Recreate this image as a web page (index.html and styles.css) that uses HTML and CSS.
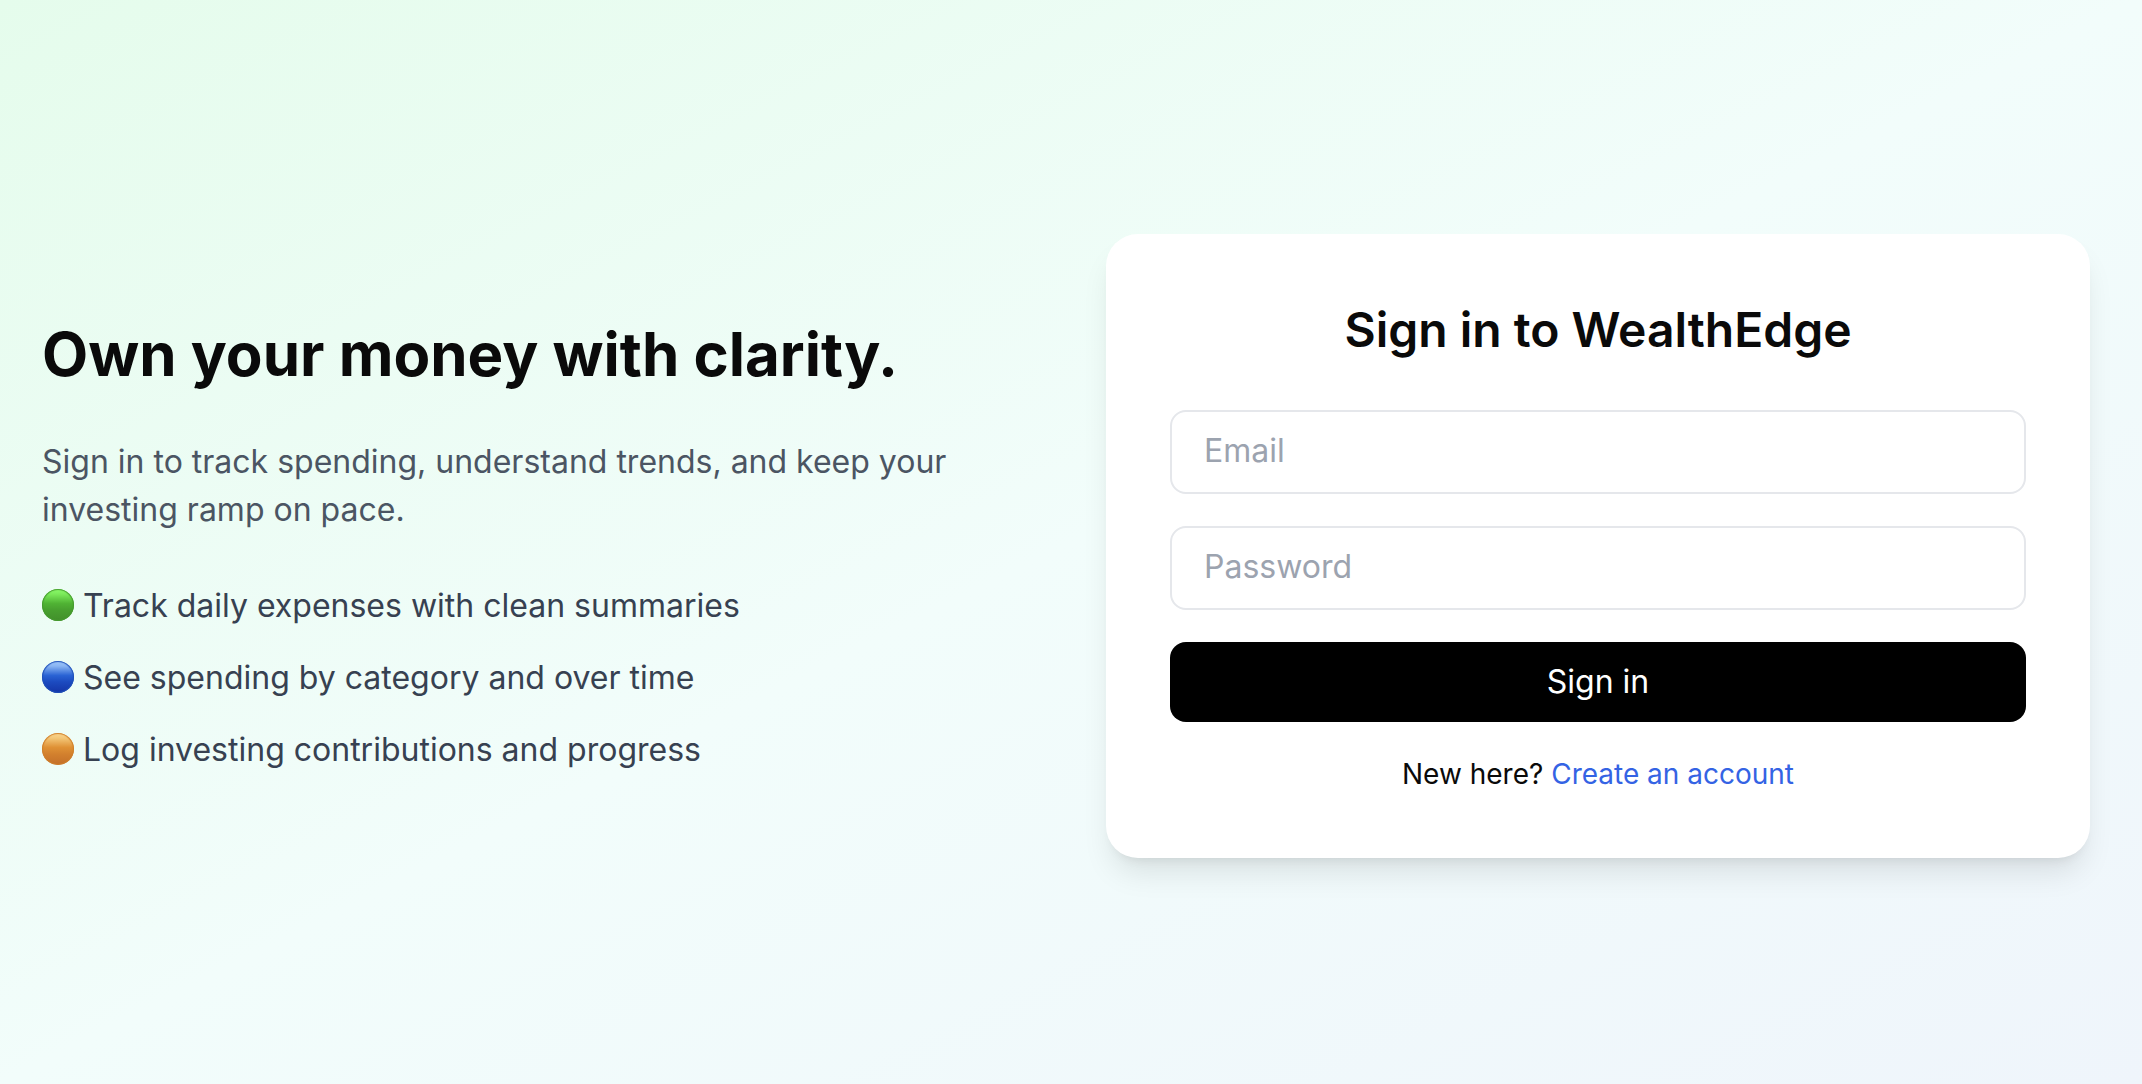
FILE: index.html
```html
<!DOCTYPE html>
<html lang="en">
<head>
  <meta charset="utf-8">
  <meta name="viewport" content="width=device-width, initial-scale=1">
  <title>Sign in to WealthEdge</title>
  <link rel="stylesheet" href="styles.css">
</head>
<body>
  <main class="page">
    <section class="intro">
      <h1 class="intro-title">Own your money with clarity.</h1>
      <p class="intro-text">Sign in to track spending, understand trends, and keep your investing ramp on pace.</p>
      <ul class="features">
        <li><span class="dot dot-green"></span> Track daily expenses with clean summaries</li>
        <li><span class="dot dot-blue"></span> See spending by category and over time</li>
        <li><span class="dot dot-orange"></span> Log investing contributions and progress</li>
      </ul>
    </section>
    <section class="card">
      <h2 class="card-title">Sign in to WealthEdge</h2>
      <form class="form">
        <input class="field" type="email" placeholder="Email" aria-label="Email">
        <input class="field" type="password" placeholder="Password" aria-label="Password">
        <button class="submit" type="submit">Sign in</button>
      </form>
      <p class="signup">New here? <a class="link" href="#">Create an account</a></p>
    </section>
  </main>
</body>
</html>
```
FILE: styles.css
```css
*,
*::before,
*::after {
  box-sizing: border-box;
  margin: 0;
  padding: 0;
}

body {
  font-family: Inter, "Liberation Sans", sans-serif;
  font-size: 32px;
  line-height: 48px;
  color: #0a0a0a;
}

.page {
  min-height: 100vh;
  padding: 8px 52px 0 42px;
  display: grid;
  grid-template-columns: 1fr 1fr;
  gap: 80px;
  align-items: center;
  background: linear-gradient(to bottom right, #e5fcec, #f2fdfb 50%, #eff5fb);
}

.intro {
  display: flex;
  flex-direction: column;
  gap: 48px;
}

.intro-title {
  font-size: 60px;
  line-height: 72px;
  font-weight: 700;
}

.intro-text {
  color: #4b5563;
}

.features {
  display: flex;
  flex-direction: column;
  gap: 24px;
  list-style: none;
  color: #374151;
}

.dot {
  display: inline-block;
  width: 32px;
  height: 32px;
  border-radius: 50%;
  vertical-align: -4px;
}

.dot-green {
  background: linear-gradient(#8dfb6b, #7bea5a 16%, #50b334 45%, #48a02f 65%, #428f2b);
  box-shadow: inset 0 0 1px 1px #459a2e;
}

.dot-blue {
  background: linear-gradient(#a0c8fa, #8ab5f3 16%, #2a63d4 45%, #1c4bc0 65%, #1434a6);
  box-shadow: inset 0 0 1px 1px #1f50b8;
}

.dot-orange {
  background: linear-gradient(#fbd793, #f3c677 16%, #df9135 45%, #d3812e 65%, #c36f29);
  box-shadow: inset 0 0 1px 1px #cf7f2b;
}

.card {
  padding: 64px;
  border-radius: 32px;
  background: #fff;
  box-shadow: 0 20px 30px -6px rgb(0 0 0 / 10%), 0 8px 12px -8px rgb(0 0 0 / 10%);
  text-align: center;
}

.card-title {
  margin-bottom: 48px;
  font-size: 48px;
  line-height: 64px;
  font-weight: 600;
}

.form {
  display: flex;
  flex-direction: column;
  gap: 32px;
}

.field,
.submit {
  width: 100%;
  border-radius: 16px;
  font: inherit;
}

.field {
  padding: 15px 32px 17px;
  border: 2px solid #e5e7eb;
  background: #fff;
  color: inherit;
}

.field::placeholder {
  color: #9ca3af;
}

.submit {
  padding: 16px 32px;
  border: 0;
  background: #000;
  color: #fff;
}

.signup {
  margin-top: 32px;
  font-size: 28px;
  line-height: 40px;
}

.link {
  color: #3463e4;
  text-decoration: none;
}
```
